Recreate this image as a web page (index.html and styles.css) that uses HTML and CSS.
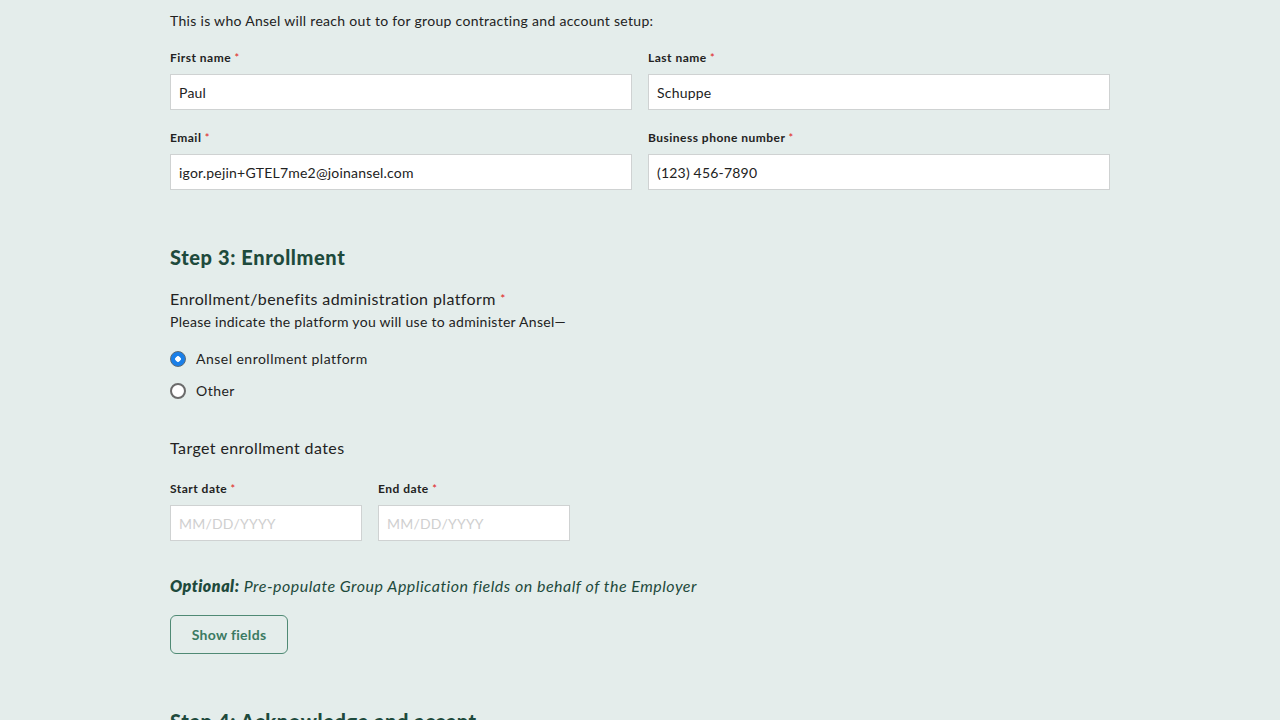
FILE: index.html
```html
<!DOCTYPE html>
<html lang="en">
<head>
<meta charset="utf-8">
<title>Enrollment</title>
<link rel="stylesheet" href="styles.css">
</head>
<body>
<main class="page">
  <p class="intro">This is who Ansel will reach out to for group contracting and account setup:</p>
  <div class="grid-2">
    <div class="field">
      <label class="label">First name <span class="req">*</span></label>
      <input class="input" type="text" value="Paul">
    </div>
    <div class="field">
      <label class="label">Last name <span class="req">*</span></label>
      <input class="input" type="text" value="Schuppe">
    </div>
    <div class="field">
      <label class="label">Email <span class="req">*</span></label>
      <input class="input" type="text" value="igor.pejin+GTEL7me2@joinansel.com">
    </div>
    <div class="field">
      <label class="label">Business phone number <span class="req">*</span></label>
      <input class="input" type="text" value="(123) 456-7890">
    </div>
  </div>

  <section class="step">
    <h2 class="step-title">Step 3: Enrollment</h2>
    <div class="question">Enrollment/benefits administration platform <span class="req">*</span></div>
    <div class="hint">Please indicate the platform you will use to administer Ansel—</div>
    <div class="radios">
      <label class="radio-row"><span class="radio checked"></span>Ansel enrollment platform</label>
      <label class="radio-row"><span class="radio"></span>Other</label>
    </div>

    <div class="question dates-title">Target enrollment dates</div>
    <div class="dates">
      <div class="field">
        <label class="label">Start date <span class="req">*</span></label>
        <input class="input" type="text" placeholder="MM/DD/YYYY">
      </div>
      <div class="field">
        <label class="label">End date <span class="req">*</span></label>
        <input class="input" type="text" placeholder="MM/DD/YYYY">
      </div>
    </div>

    <p class="optional"><strong>Optional:</strong> Pre-populate Group Application fields on behalf of the Employer</p>
    <button class="btn-outline" type="button">Show fields</button>
  </section>

  <section class="step step-last">
    <h2 class="step-title">Step 4: Acknowledge and accept</h2>
  </section>
</main>
</body>
</html>
```

FILE: styles.css
```css
* { box-sizing: border-box; }
html, body {
  margin: 0;
  background: #e4edeb;
}
body {
  font-family: "Lato", "Open Sans", sans-serif;
  color: #222;
  letter-spacing: 0.03em;
  height: 720px;
  overflow: hidden;
}
.page {
  width: 940px;
  margin: 0 auto;
  padding-top: 12px;
}
.intro {
  margin: 0;
  font-size: 14px;
  line-height: 18px;
  letter-spacing: 0.3px;
  color: #222;
}
.grid-2 {
  display: grid;
  grid-template-columns: 1fr 1fr;
  column-gap: 16px;
  row-gap: 20px;
  margin-top: 20px;
}
.field {
  display: flex;
  flex-direction: column;
}
.label {
  font-size: 12px;
  font-weight: 700;
  line-height: 16px;
  color: #222;
  margin-bottom: 8px;
}
.req { color: #e02020; font-weight: 400; font-size: 11px; vertical-align: top; }
.input {
  height: 36px;
  border: 1px solid #cfd2d2;
  background: #fff;
  padding: 0 8px;
  font-family: inherit;
  font-size: 14px;
  letter-spacing: 0.2px;
  color: #222;
  outline: none;
}
.input::placeholder { color: #cfcfcf; }
.step { margin-top: 54px; }
.step-title {
  margin: 0;
  font-size: 20px;
  line-height: 26px;
  font-weight: 900;
  letter-spacing: 0.6px;
  color: #1e4a3c;
}
.question {
  margin-top: 19px;
  font-size: 16px;
  line-height: 20px;
  letter-spacing: 0.4px;
  color: #222;
}
.question .req { font-size: 12px; }
.hint {
  margin-top: 4px;
  font-size: 14px;
  line-height: 18px;
  letter-spacing: 0.28px;
}
.radios {
  margin-top: 19px;
  display: flex;
  flex-direction: column;
  gap: 14px;
}
.radio-row {
  display: flex;
  align-items: center;
  gap: 10px;
  font-size: 14px;
  line-height: 18px;
}
.radio {
  width: 16px;
  height: 16px;
  border-radius: 50%;
  border: 2px solid #6b6b6b;
  background: #fff;
  flex: none;
}
.radio.checked {
  border: 1px solid #5a6a78;
  background: radial-gradient(circle, #fff 0 2.5px, #1a7fe8 3px);
}
.dates-title { margin-top: 38px; }
.dates {
  display: grid;
  grid-template-columns: 192px 192px;
  column-gap: 16px;
  margin-top: 23px;
}
.optional {
  margin: 35px 0 0;
  font-size: 16px;
  line-height: 20px;
  font-style: italic;
  letter-spacing: 0.5px;
  color: #1e4a3c;
}
.optional strong { font-weight: 800; }
.btn-outline {
  margin-top: 19px;
  width: 118px;
  height: 39px;
  border: 1px solid #4f8a74;
  border-radius: 6px;
  background: transparent;
  color: #3b7a62;
  font-family: inherit;
  font-size: 14px;
  font-weight: 700;
  letter-spacing: 0.3px;
}
.step-last { margin-top: 54px; }
```
